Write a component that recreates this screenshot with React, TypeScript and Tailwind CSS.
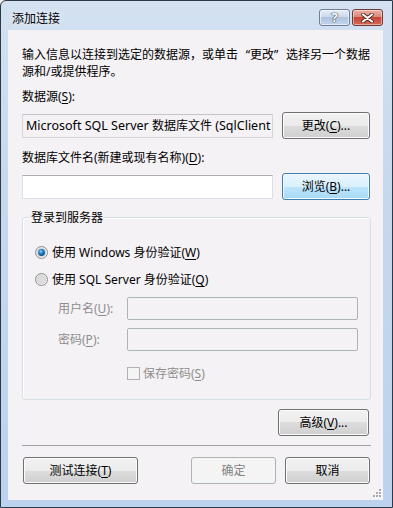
import React from 'react';

// ---------------------------------------------------------------------------
// Win7-style dialog: 添加连接
// ---------------------------------------------------------------------------
const FONT = "font-['Noto_Sans','Noto_Sans_CJK_SC',sans-serif]";

function Btn({
  children,
  className = '',
  focused = false,
  disabled = false,
}: {
  children: React.ReactNode;
  className?: string;
  focused?: boolean;
  disabled?: boolean;
}) {
  const look = disabled
    ? 'border-[#adb2b5] bg-[#f4f4f4] text-[#838383]'
    : focused
      ? 'border-[#3c7fb1] bg-[linear-gradient(#eaf6fd_0%,#d9f0fc_50%,#bee6fd_50%,#a7d9f5_100%)] shadow-[inset_0_0_0_1px_#f4fbff] text-black'
      : 'border-[#707070] bg-[linear-gradient(#f2f2f2_0%,#ebebeb_50%,#dddddd_50%,#cfcfcf_100%)] shadow-[inset_0_0_0_1px_#fcfcfc] text-black';
  return (
    <div
      className={`flex h-[27px] items-center justify-center rounded-[3px] border text-[12px] leading-[17px] ${look} ${className}`}
    >
      <span>{children}</span>
    </div>
  );
}

function U({ children }: { children: React.ReactNode }) {
  return <span className="underline underline-offset-[2px]">{children}</span>;
}

function Radio({ checked }: { checked?: boolean }) {
  return (
    <svg width="13" height="13" viewBox="0 0 13 13" className="shrink-0">
      <defs>
        <linearGradient id="rg-ring" x1="0" y1="0" x2="1" y2="1">
          <stop offset="0" stopColor="#e6e6e6" />
          <stop offset="1" stopColor="#fbfbfb" />
        </linearGradient>
        <radialGradient id="rg-dot" cx="0.4" cy="0.35" r="0.7">
          <stop offset="0" stopColor="#8fd3ff" />
          <stop offset="0.45" stopColor="#1d86cf" />
          <stop offset="1" stopColor="#0b3f6e" />
        </radialGradient>
      </defs>
      <circle cx="6.5" cy="6.5" r="6" fill="url(#rg-ring)" stroke="#8b8b8b" strokeWidth="1" />
      <circle cx="6.5" cy="6.5" r="4.3" fill="#dcdcdc" stroke="#c8c8c8" strokeWidth="0.6" />
      {checked && <circle cx="6.5" cy="6.5" r="3.4" fill="url(#rg-dot)" />}
    </svg>
  );
}

export default function App() {
  return (
    <div className={`${FONT} h-[508px] w-[393px] overflow-hidden bg-[#f0f0f0]`}>
      <div className="flex h-[508px] w-[393px] flex-col rounded-tl-[6px] border border-[#2c3a48] bg-[linear-gradient(#d3e1f1_0%,#c6d8ee_40%,#bcd2ee_100%)] pl-[7px] pr-[9px] pb-[7px]">
        {/* Title bar */}
        <div className="flex h-[29px] shrink-0 items-start">
          <div className="mt-[9px] ml-[4px] flex-1 text-[12px] leading-[17px] text-black [text-shadow:0_0_6px_rgba(255,255,255,0.95)]">
            添加连接
          </div>
          <div className="mt-[8px] flex gap-[2px]">
            <div className="flex h-[17px] w-[31px] items-center justify-center rounded-[3px] border border-[#6b7f9a] bg-[linear-gradient(#e7eef7_0%,#c9d7e9_50%,#aec3de_50%,#c2d4ea_100%)] shadow-[inset_0_0_0_1px_rgba(255,255,255,0.6)]">
              <span className="text-[13px] font-bold leading-none text-white [text-shadow:0_0_1px_#2e3f55,0_0_1px_#2e3f55,0_0_1px_#2e3f55]">
                ?
              </span>
            </div>
            <div className="flex h-[17px] w-[31px] items-center justify-center rounded-[3px] border border-[#6e3a35] bg-[linear-gradient(#eab1a4_0%,#db8373_50%,#c8453a_50%,#d66a55_100%)] shadow-[inset_0_0_0_1px_rgba(255,255,255,0.45)]">
              <svg width="13" height="10" viewBox="0 0 13 10">
                <path
                  d="M2 1.5 L11 8.5 M11 1.5 L2 8.5"
                  stroke="#4a1f1a"
                  strokeWidth="3.6"
                  strokeLinecap="round"
                />
                <path
                  d="M2 1.5 L11 8.5 M11 1.5 L2 8.5"
                  stroke="#ffffff"
                  strokeWidth="2.2"
                  strokeLinecap="round"
                />
              </svg>
            </div>
          </div>
        </div>

        {/* Client area */}
        <div className="relative flex flex-1 flex-col bg-[#f5f2f5] pl-[14px] pt-[16px] text-[12px] leading-[17px] text-black">
          <p className="whitespace-nowrap">
            输入信息以连接到选定的数据源，或单击
            <span className="inline-block w-[12px] text-right">“</span>更改
            <span className="inline-block w-[12px] text-left">”</span>选择另一个数据
            <br />
            源和/或提供程序。
          </p>

          <div className="mt-[8px]">
            数据源(<U>S</U>):
          </div>
          <div className="mt-[7px] flex h-[27px] w-[349px] items-center">
            <div className="h-[24px] w-[251px] overflow-hidden whitespace-nowrap border border-[#d6d6d6] border-t-[#c4c4c4] bg-[#f5f2f5] px-[3px] text-[12.5px] leading-[22px]">
              Microsoft SQL Server <span className="text-[12px]">数据库文件</span> (SqlClient
            </div>
            <Btn className="ml-[9px] w-[88px]">
              更改(<U>C</U>)...
            </Btn>
          </div>

          <div className="mt-[10px]">
            数据库文件名(新建或现有名称)(<U>D</U>):
          </div>
          <div className="mt-[7px] flex h-[27px] w-[349px] items-center">
            <div className="h-[24px] w-[251px] border border-[#dbdfe6] border-t-[#abadb3] bg-white" />
            <Btn focused className="ml-[9px] w-[88px]">
              浏览(<U>B</U>)...
            </Btn>
          </div>

          {/* Group box */}
          <div className="relative mt-[17px] h-[183px] w-[349px] rounded-[3px] border border-[#d5dfe5] pl-[12px] pt-[26px] shadow-[inset_1px_1px_0_#ffffff]">
            <div className="absolute -top-[9px] left-[7px] bg-[#f5f2f5] px-[1px]">登录到服务器</div>

            <div className="flex items-center gap-[4px]">
              <Radio checked />
              <span>
                使用 Windows 身份验证(<U>W</U>)
              </span>
            </div>
            <div className="mt-[10px] flex items-center gap-[4px]">
              <Radio />
              <span>
                使用 SQL Server 身份验证(<U>Q</U>)
              </span>
            </div>

            <div className="mt-[9px] flex h-[23px] items-center text-[#8d8d8d]">
              <span className="ml-[23px] w-[69px]">
                用户名(<U>U</U>):
              </span>
              <div className="h-[23px] w-[231px] rounded-[2px] border border-[#adb2b5] bg-[#f5f2f5]" />
            </div>
            <div className="mt-[8px] flex h-[23px] items-center text-[#8d8d8d]">
              <span className="ml-[23px] w-[69px]">
                密码(<U>P</U>):
              </span>
              <div className="h-[23px] w-[231px] rounded-[2px] border border-[#adb2b5] bg-[#f5f2f5]" />
            </div>
            <div className="mt-[14px] ml-[92px] flex items-center gap-[3px] text-[#8d8d8d]">
              <div className="h-[13px] w-[13px] border border-[#b1b1b1] bg-[#f4f4f4]" />
              <span>
                保存密码(<U>S</U>)
              </span>
            </div>
          </div>

          <div className="mt-[9px] flex w-[349px] justify-end">
            <Btn className="mr-[2px] w-[91px]">
              高级(<U>V</U>)...
            </Btn>
          </div>

          <div className="mt-[9px] h-[2px] w-[349px] border-t border-[#a0a0a0] border-b-white" />

          <div className="mt-[10px] flex w-[349px] items-center">
            <Btn className="ml-[1px] w-[115px]">
              测试连接(<U>T</U>)
            </Btn>
            <Btn disabled className="ml-[53px] w-[85px]">
              确定
            </Btn>
            <Btn className="ml-[9px] w-[85px]">取消</Btn>
          </div>

          {/* Size grip */}
          <svg
            width="9"
            height="9"
            viewBox="0 0 9 9"
            className="absolute bottom-[2px] right-[1px]"
          >
            {[
              [7, 1],
              [4, 4],
              [7, 4],
              [1, 7],
              [4, 7],
              [7, 7],
            ].map(([x, y], i) => (
              <g key={i}>
                <rect x={x} y={y} width="2" height="2" fill="#ffffff" />
                <rect x={x - 1} y={y - 1} width="2" height="2" fill="#a4a9b1" />
              </g>
            ))}
          </svg>
        </div>
      </div>
    </div>
  );
}
